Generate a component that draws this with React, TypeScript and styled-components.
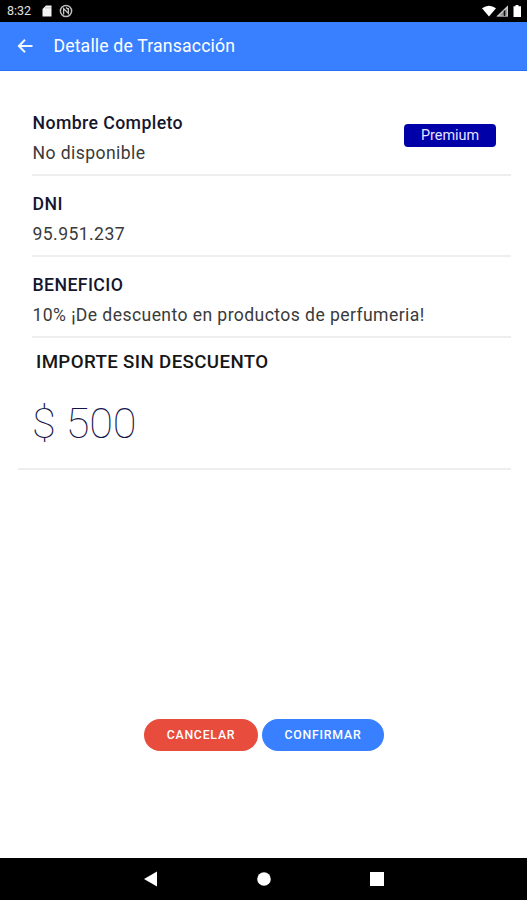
import React from "react";
import styled, { createGlobalStyle } from "styled-components";

const Global = createGlobalStyle`
  * { box-sizing: border-box; }
  body { margin: 0; background: #fff; font-family: Roboto, sans-serif; }
`;

const Screen = styled.div`
  display: flex;
  flex-direction: column;
  width: 527px;
  height: 900px;
  background: #fff;
  overflow: hidden;
`;

const StatusBar = styled.div`
  display: flex;
  align-items: center;
  justify-content: space-between;
  height: 22px;
  padding: 0 5px 0 7px;
  background: #000;
  color: #e0e0e0;
`;

const StatusIcons = styled.div`
  display: flex;
  align-items: center;
  height: 22px;
`;

const Clock = styled.span`
  width: 35px;
  font-size: 12.5px;
  line-height: 22px;
`;

const NfcIcon = styled.svg`
  margin-left: 7px;
`;

const Toolbar = styled.header`
  display: flex;
  align-items: center;
  height: 49px;
  padding-left: 17px;
  background: #3880ff;
  border-bottom: 1px solid #2470f2;
  color: #fff;
`;

const Title = styled.h1`
  margin: 0 0 0 20.4px;
  font-size: 17.7px;
  font-weight: 400;
  line-height: 24px;
  letter-spacing: 0.15px;
`;

const Content = styled.main`
  display: flex;
  flex-direction: column;
  height: 787px;
  padding: 24px 16px 0 18px;
`;

const Item = styled.section`
  display: flex;
  justify-content: space-between;
  height: 81px;
  margin-left: 14px;
  padding: 16px 0 0 0.5px;
  border-bottom: 2px solid #eeeeee;
`;

const Label = styled.h2`
  margin: 0;
  font-size: 17.7px;
  font-weight: 500;
  line-height: 24px;
  letter-spacing: 0.4px;
  color: #16162e;
`;

const Value = styled.p`
  margin: 6px 0 0;
  font-size: 17.6px;
  font-weight: 400;
  line-height: 24px;
  letter-spacing: 0.41px;
  color: #3a3a3a;
`;

const Badge = styled.span`
  width: 92px;
  height: 23px;
  margin: 13px 15px 0 0;
  border-radius: 4px;
  background: #0000a8;
  color: #e4e4ff;
  font-size: 14.4px;
  line-height: 23px;
  text-align: center;
`;

const Amount = styled.section`
  height: 132px;
  padding: 12px 0 0 14px;
  border-bottom: 2px solid #eeeeee;
`;

const AmountLabel = styled.h2`
  margin: 0 0 0 4px;
  font-size: 18.7px;
  font-weight: 500;
  line-height: 24px;
  letter-spacing: 0.37px;
  color: #161616;
`;

const AmountValue = styled.div`
  margin-top: 22px;
  font-size: 43.4px;
  font-weight: 100;
  line-height: 56px;
  letter-spacing: -0.2px;
  color: #14144a;
`;

const Actions = styled.div`
  display: flex;
  justify-content: center;
  gap: 4px;
  margin-top: auto;
  padding: 0 2px 107px 0;
`;

const Button = styled.button<{ $tone: string; $width: number }>`
  width: ${(p) => p.$width}px;
  height: 32px;
  padding: 0 0 0 1px;
  border: 0;
  border-radius: 16px;
  background: ${(p) => p.$tone};
  color: #fff;
  font: 500 12.3px/30px Roboto, sans-serif;
  letter-spacing: 0.76px;
`;

const NavBar = styled.nav`
  display: flex;
  align-items: center;
  justify-content: space-between;
  height: 42px;
  padding: 0 143px 0 144px;
  background: #000;
`;

const entries = [
  { label: "Nombre Completo", value: "No disponible", badge: "Premium" },
  { label: "DNI", value: "95.951.237" },
  { label: "BENEFICIO", value: "10% ¡De descuento en productos de perfumeria!" },
];

export default function App() {
  return (
    <Screen>
      <Global />
      <StatusBar>
        <StatusIcons>
          <Clock>8:32</Clock>
          <svg width="10" height="12" viewBox="0 0 10 12">
            <path d="M4 .5H9.5V11.5H.5V4Z" fill="#f4f4f4" />
            <path d="M4 2v1.6M6 2v1.6M8 2v1.6" stroke="#999" strokeWidth=".7" />
          </svg>
          <NfcIcon width="14" height="14" viewBox="0 0 14 14">
            <circle cx="7" cy="7" r="5.6" fill="none" stroke="#bdbdbd" strokeWidth="1.5" />
            <path d="M4.6 10.5V4.5L9.4 9.5V4M7 3.5l2.4 2" fill="none" stroke="#c8c8c8" strokeWidth="1.3" />
          </NfcIcon>
        </StatusIcons>
        <StatusIcons>
          <svg width="40" height="14" viewBox="0 0 40 14">
            <path d="M0 4.3Q7 -1 14 4.3L7 12.5Z" fill="#fff" />
            <path d="M26 1.5V12.5H14.5Z" fill="#8a8a8a" />
            <path d="M25.3 3V12H16Z" fill="none" stroke="#ccc" strokeWidth="1.2" />
            <path d="M22.5 6.5V12" stroke="#111" strokeWidth="1.5" />
            <path d="M33.5 1h3v1.2H39V13H31.5V2.2h2Z" fill="#fff" />
          </svg>
        </StatusIcons>
      </StatusBar>
      <Toolbar>
        <svg width="16" height="16" viewBox="0 0 16 16">
          <path d="M8 1.8 1.9 8 8 14.2M2 8H15.5" fill="none" stroke="#f2f7ff" strokeWidth="2" />
        </svg>
        <Title>Detalle de Transacción</Title>
      </Toolbar>
      <Content>
        {entries.map((entry) => (
          <Item key={entry.label}>
            <div>
              <Label>{entry.label}</Label>
              <Value>{entry.value}</Value>
            </div>
            {entry.badge && <Badge>{entry.badge}</Badge>}
          </Item>
        ))}
        <Amount>
          <AmountLabel>IMPORTE SIN DESCUENTO</AmountLabel>
          <AmountValue>$ 500</AmountValue>
        </Amount>
        <Actions>
          <Button $tone="#e74c3c" $width={114}>CANCELAR</Button>
          <Button $tone="#3880ff" $width={122}>CONFIRMAR</Button>
        </Actions>
      </Content>
      <NavBar>
        <svg width="14" height="16" viewBox="0 0 14 16"><path d="M0 8 13 .5V15.5Z" fill="#fff" /></svg>
        <svg width="14" height="14" viewBox="0 0 14 14"><circle cx="7" cy="7" r="6.8" fill="#fff" /></svg>
        <svg width="14" height="14" viewBox="0 0 14 14"><rect width="14" height="14" fill="#fff" /></svg>
      </NavBar>
    </Screen>
  );
}
